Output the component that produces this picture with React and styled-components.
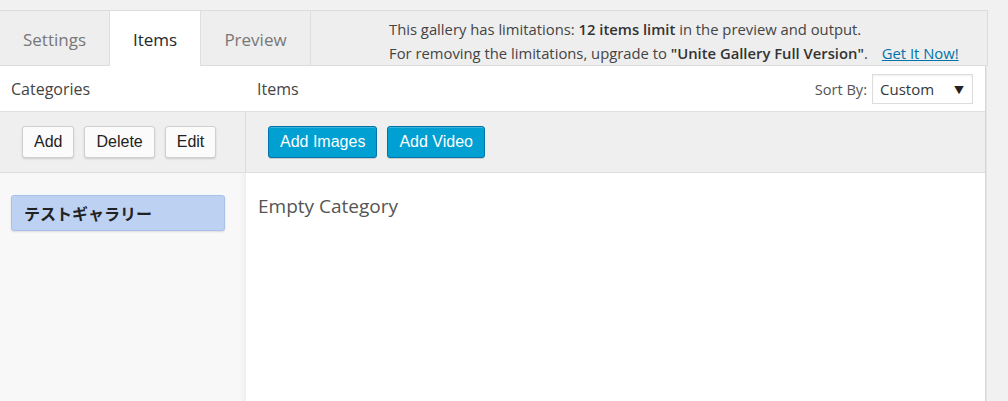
import styled, { createGlobalStyle } from "styled-components";

const GlobalStyle = createGlobalStyle`
  body {
    margin: 0;
    background: #f1f1f1;
    font-family: "Open Sans", "Noto Sans CJK JP", sans-serif;
    color: #444;
  }
`;

const App = () => {
  return (
    <Page>
      <GlobalStyle />
      <Frame>
        <TabBar>
          <Tab>Settings</Tab>
          <Tab active>Items</Tab>
          <Tab>Preview</Tab>
          <Notice>
            <div>
              This gallery has limitations: <b>12 items limit</b> in the preview and output.
            </div>
            <div>
              For removing the limitations, upgrade to <b>"Unite Gallery Full Version"</b>.
              <Link href="#">Get It Now!</Link>
            </div>
          </Notice>
        </TabBar>

        <HeaderRow>
          <HeaderCell>Categories</HeaderCell>
          <HeaderCell>
            Items
            <SortBox>
              Sort By:
              <Select>
                Custom
                <Arrow>▼</Arrow>
              </Select>
            </SortBox>
          </HeaderCell>
        </HeaderRow>

        <ToolbarRow>
          <Toolbar side>
            <Button>Add</Button>
            <Button>Delete</Button>
            <Button>Edit</Button>
          </Toolbar>
          <Toolbar>
            <PrimaryButton>Add Images</PrimaryButton>
            <PrimaryButton>Add Video</PrimaryButton>
          </Toolbar>
        </ToolbarRow>

        <BodyRow>
          <CategoryList>
            <CategoryItem>テストギャラリー</CategoryItem>
          </CategoryList>
          <ItemsArea>Empty Category</ItemsArea>
        </BodyRow>
      </Frame>
    </Page>
  );
};

const Page = styled.div`
  padding-top: 10px;
  height: 391px;
  overflow: hidden;
`;

const Frame = styled.div`
  width: 985px;
  border-right: 1px solid #d6d6d6;
  box-shadow: 1px 0 0 #e6e6e6;
  background: #fff;
`;

const TabBar = styled.div`
  display: flex;
  height: 54px;
  background: #eee;
  border-top: 1px solid #dcdcdc;
  border-bottom: 1px solid #dcdcdc;
  width: 988px;
`;

const Tab = styled.div`
  width: ${(p) => (p.active ? "91px" : "110px")};
  display: flex;
  align-items: center;
  justify-content: center;
  font-size: 17px;
  color: ${(p) => (p.active ? "#23282d" : "#777")};
  background: ${(p) => (p.active ? "#fff" : "#eee")};
  border-right: 1px solid #dedede;
  margin-bottom: ${(p) => (p.active ? "-1px" : "0")};
  padding-top: 2px;
  box-sizing: border-box;
`;

const Notice = styled.div`
  flex: 1;
  padding: 6px 0 0 78px;
  font-size: 14.8px;
  line-height: 24px;
  color: #444;
  border-right: 1px solid #dcdcdc;

  b {
    font-weight: 600;
    color: #333;
  }
`;

const Link = styled.a`
  color: #0073aa;
  margin-left: 14px;
  text-decoration: underline;
`;

const HeaderRow = styled.div`
  display: grid;
  grid-template-columns: 246px 1fr;
  height: 45px;
  border-bottom: 1px solid #e0e0e0;
`;

const HeaderCell = styled.div`
  display: flex;
  align-items: center;
  padding: 0 12px 0 11px;
  font-size: 16px;
  color: #444;
`;

const SortBox = styled.div`
  margin-left: auto;
  display: flex;
  align-items: center;
  gap: 5px;
  font-size: 14.6px;
  color: #555;
`;

const Select = styled.div`
  position: relative;
  width: 101px;
  height: 30px;
  box-sizing: border-box;
  border: 1px solid #ddd;
  box-shadow: inset 0 1px 2px rgba(0, 0, 0, 0.07);
  display: flex;
  align-items: center;
  padding-left: 7px;
  font-size: 15px;
  color: #32373c;
`;

const Arrow = styled.span`
  position: absolute;
  right: 8px;
  top: 7px;
  font-size: 10px;
  color: #222;
`;

const ToolbarRow = styled.div`
  display: grid;
  grid-template-columns: 246px 1fr;
  height: 60px;
  background: #efefef;
  border-bottom: 1px solid #dedede;
`;

const Toolbar = styled.div`
  display: flex;
  align-items: center;
  gap: 10px;
  padding-left: 22px;
  border-right: ${(p) => (p.side ? "1px solid #dcdcdc" : "none")};
`;

const Button = styled.button`
  height: 32px;
  padding: 0 11px;
  font-family: "Liberation Sans", Arial, sans-serif;
  font-size: 16px;
  color: #222;
  background: #fbfbfb;
  border: 1px solid #d0d0d0;
  border-radius: 3px;
  box-shadow: 0 1px 2px rgba(0, 0, 0, 0.15);
`;

const PrimaryButton = styled(Button)`
  color: #fff;
  background: #00a0d2;
  border-color: #0073aa;
  padding: 0 11px;
  box-shadow: inset 0 1px 0 rgba(120, 200, 230, 0.5), 0 1px 0 rgba(0, 0, 0, 0.15);
`;

const BodyRow = styled.div`
  display: grid;
  grid-template-columns: 246px 1fr;
  height: 240px;
`;

const CategoryList = styled.div`
  background: #f8f8f8;
  box-shadow: inset -6px 0 4px -4px rgba(0, 0, 0, 0.04);
  border-right: 1px solid #f0f0f0;
  padding: 22px 0 0 11px;
`;

const CategoryItem = styled.div`
  width: 214px;
  height: 36px;
  box-sizing: border-box;
  display: flex;
  align-items: center;
  padding-left: 12px;
  background: #bdd2f3;
  border: 1px solid #a9c1ea;
  border-radius: 3px;
  box-shadow: 0 1px 2px rgba(0, 0, 0, 0.12);
  font-family: "Liberation Sans", "Noto Sans CJK JP", sans-serif;
  font-weight: bold;
  font-size: 16px;
  color: #222;
`;

const ItemsArea = styled.div`
  padding: 20px 0 0 12px;
  font-size: 19px;
  color: #555;
`;

export default App;
